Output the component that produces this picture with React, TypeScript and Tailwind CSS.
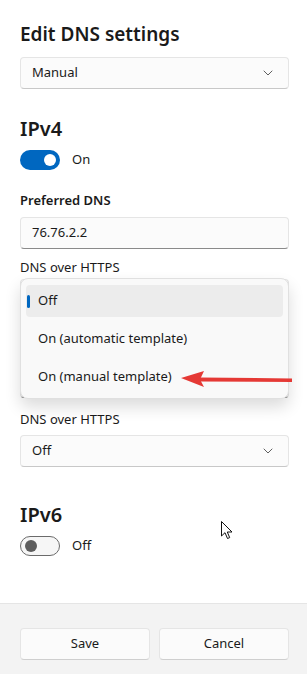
import React from "react";

const font = { fontFamily: '"Segoe UI", "Noto Sans", sans-serif' };

function Chevron() {
  return (
    <svg width="10" height="6" viewBox="0 0 10 6" className="shrink-0">
      <path d="M1 1 L5 5 L9 1" fill="none" stroke="#5f5f5f" strokeWidth="1" strokeLinecap="round" strokeLinejoin="round" />
    </svg>
  );
}

function Combo({ value }: { value: string }) {
  return (
    <div className="flex h-[32px] items-center justify-between rounded-[4px] border border-[#e5e5e5] border-b-[#c8c8c8] bg-[#fbfbfb] pl-[11px] pr-[15px] text-[13px] text-[#1a1a1a]">
      <span>{value}</span>
      <Chevron />
    </div>
  );
}

function TextBox({ value }: { value: string }) {
  return (
    <div className="flex h-[32px] items-center rounded-[4px] border border-[#e5e5e5] border-b-[#8a8a8a] bg-[#fbfbfb] pl-[11px] text-[13px] text-[#1a1a1a]">
      {value}
    </div>
  );
}

function Toggle({ on, label }: { on: boolean; label: string }) {
  return (
    <div className="flex h-[20px] items-center gap-[12px]">
      {on ? (
        <div className="flex h-[20px] w-[40px] items-center justify-end rounded-full bg-[#0067c0] pr-[4px]">
          <div className="h-[12px] w-[12px] rounded-full bg-white" />
        </div>
      ) : (
        <div className="flex h-[20px] w-[40px] items-center rounded-full border border-[#6b6b6b] bg-[#f6f6f6] pl-[4px]">
          <div className="h-[12px] w-[12px] rounded-full bg-[#5d5d5d]" />
        </div>
      )}
      <span className="text-[13px] text-[#1a1a1a]">{label}</span>
    </div>
  );
}

export default function App() {
  return (
    <div className="relative flex h-[674px] w-[307px] flex-col overflow-hidden bg-white text-[#1a1a1a]" style={font}>
      <div className="relative flex flex-col pl-5 pr-[18px]">
        <h1 className="mt-[20px] text-[19px] font-semibold leading-[28px]">Edit DNS settings</h1>
        <div className="mt-[9px]">
          <Combo value="Manual" />
        </div>
        <h2 className="mt-[26px] text-[20px] font-semibold leading-[28px]">IPv4</h2>
        <div className="mt-[7px]">
          <Toggle on={true} label="On" />
        </div>
        <div className="mt-[20px] text-[13px] font-semibold leading-[20px]">Preferred DNS</div>
        <div className="mt-[7px]">
          <TextBox value="76.76.2.2" />
        </div>
        <div className="mt-[8px] text-[13px] leading-[20px]">DNS over HTTPS</div>
        {/* Content hidden behind the open popup */}
        <div className="mt-[2px]">
          <Combo value="" />
        </div>
        <div className="mt-[28px] flex h-[20px] items-center">
          <div className="h-[2px] w-[2px] rounded-full bg-[#333]" />
        </div>
        <div className="mt-[7px]">
          <TextBox value="" />
        </div>
        <div className="mt-[11px] text-[13px] leading-[20px]">DNS over HTTPS</div>
        <div className="mt-[6px]">
          <Combo value="Off" />
        </div>
        <h2 className="mt-[34px] text-[20px] font-semibold leading-[28px]">IPv6</h2>
        <div className="mt-[7px]">
          <Toggle on={false} label="Off" />
        </div>

        {/* Dropdown popup */}
        <div className="absolute left-[20px] top-[278px] flex h-[121px] w-[269px] flex-col gap-[6px] rounded-[8px] border border-[#e0e0e0] bg-[#f9f9f9] px-[5px] pt-[6px] shadow-[0_8px_16px_rgba(0,0,0,0.14)]">
          <div className="relative flex h-[32px] items-center rounded-[4px] bg-[#ececec] pl-[12px] text-[13px]">
            <div className="absolute left-[1px] top-[10px] h-[13px] w-[3px] rounded-full bg-[#0067c0]" />
            Off
          </div>
          <div className="flex h-[32px] items-center pl-[12px] text-[13px]">On (automatic template)</div>
          <div className="flex h-[32px] items-center pl-[12px] text-[13px]">On (manual template)</div>
        </div>

        {/* Red arrow annotation */}
        <svg className="absolute left-[178px] top-[366px]" width="118" height="26" viewBox="0 0 118 26">
          <path d="M22 11.5 L114 12.5 L114 16 L22 15.5 Z" fill="#e53935" />
          <path d="M3 12 L26 5 L22 13.5 L26 21 Z" fill="#e53935" />
        </svg>

        {/* Mouse cursor */}
        <svg className="absolute left-[221px] top-[521px]" width="13" height="20" viewBox="0 0 13 20">
          <path d="M0.5 0.5 L0.5 15 L4 11.7 L6.5 17.5 L8.7 16.6 L6.3 11 L11 11 Z" fill="white" stroke="#111" strokeWidth="1" strokeLinejoin="round" />
        </svg>
      </div>

      <div className="mt-auto flex h-[71px] gap-[9px] border-t border-[#e5e5e5] bg-[#f3f3f3] pl-5 pr-[18px] pt-[24px]">
        <button className="h-[32px] flex-1 rounded-[4px] border border-[#e5e5e5] border-b-[#cfcfcf] bg-[#fbfbfb] text-[13px] text-[#1a1a1a]">Save</button>
        <button className="h-[32px] flex-1 rounded-[4px] border border-[#e5e5e5] border-b-[#cfcfcf] bg-[#fbfbfb] text-[13px] text-[#1a1a1a]">Cancel</button>
      </div>
    </div>
  );
}
